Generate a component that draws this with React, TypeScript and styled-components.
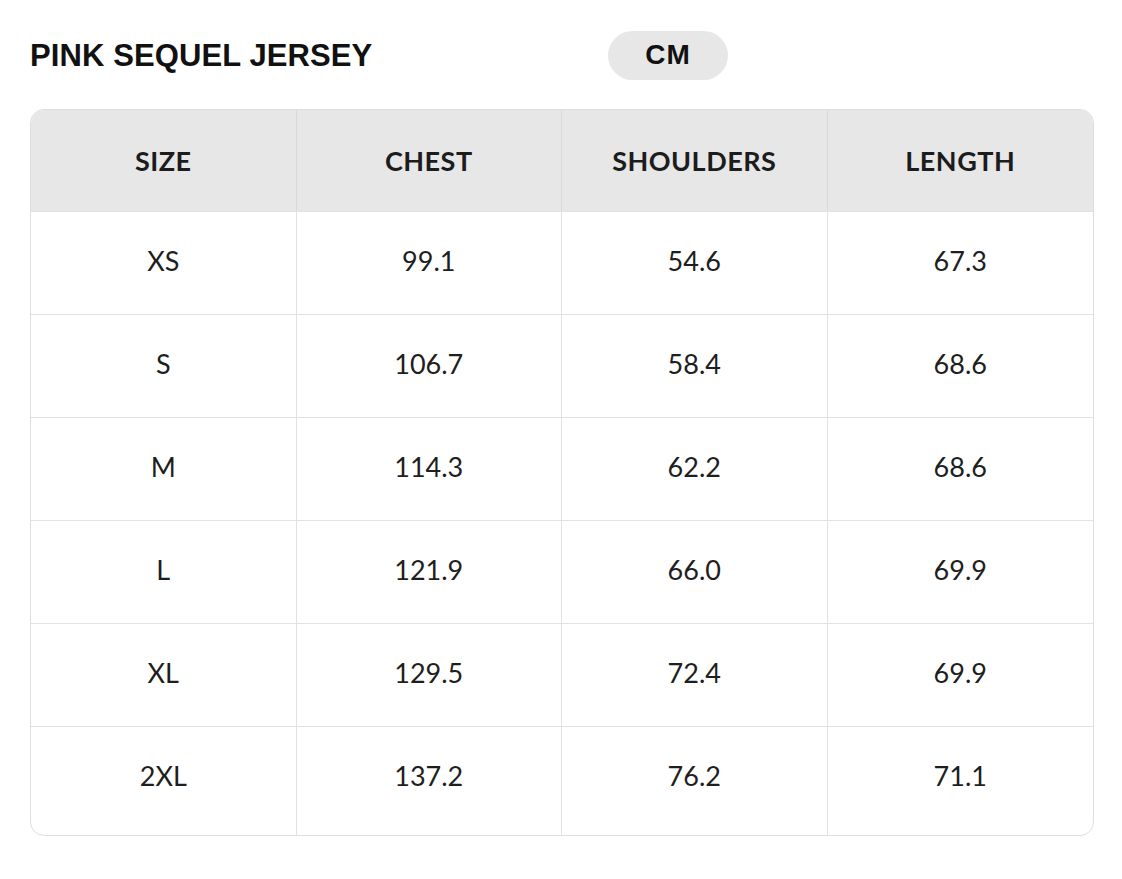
import React from 'react';
import styled, { createGlobalStyle } from 'styled-components';

const GlobalStyle = createGlobalStyle`
  html, body {
    margin: 0;
    padding: 0;
    background: #ffffff;
  }
`;

const Page = styled.div`
  width: 1122px;
  height: 879px;
  box-sizing: border-box;
  padding: 30px 28px 0 30px;
  background: #fff;
  font-family: Lato, "Open Sans", sans-serif;
  color: #1e1e1e;
`;

const TopBar = styled.div`
  display: flex;
  align-items: center;
  height: 50px;
  margin-bottom: 29px;
`;

const Title = styled.h1`
  margin: 0;
  width: 578px;
  font-family: "Liberation Sans", Arial, sans-serif;
  font-weight: 700;
  font-size: 31px;
  letter-spacing: 0.1px;
  color: #111;
  padding-top: 2px;
`;

const UnitPill = styled.div`
  width: 120px;
  height: 49px;
  border-radius: 25px;
  background: #e7e7e7;
  display: flex;
  align-items: center;
  justify-content: center;
  font-family: "Liberation Sans", Arial, sans-serif;
  font-weight: 700;
  font-size: 28px;
  letter-spacing: 1px;
  color: #111;
`;

const TableWrap = styled.div`
  width: 1064px;
  border: 1.5px solid #dedede;
  border-radius: 14px;
  overflow: hidden;
  box-sizing: border-box;
`;

const Grid = styled.div`
  display: grid;
  grid-template-columns: repeat(4, 1fr);
`;

const HeadCell = styled.div<{ $last?: boolean }>`
  height: 101px;
  display: flex;
  align-items: center;
  justify-content: center;
  background: #e7e7e7;
  border-right: ${(p) => (p.$last ? 'none' : '1.5px solid #d9d9d9')};
  font-family: Lato, sans-serif;
  font-weight: 700;
  font-size: 27px;
  letter-spacing: 0.5px;
  color: #1c1c1c;
`;

const Cell = styled.div<{ $last?: boolean; $bottom?: boolean }>`
  height: ${(p) => (p.$bottom ? '109px' : '103px')};
  display: flex;
  align-items: center;
  justify-content: center;
  border-right: ${(p) => (p.$last ? 'none' : '1.5px solid #e2e2e2')};
  border-top: 1.5px solid #e2e2e2;
  font-size: 27px;
  color: #1e1e1e;
  padding-bottom: ${(p) => (p.$bottom ? '12px' : '5px')};
  box-sizing: border-box;
`;

const heads = ['SIZE', 'CHEST', 'SHOULDERS', 'LENGTH'];

const rows = [
  ['XS', '99.1', '54.6', '67.3'],
  ['S', '106.7', '58.4', '68.6'],
  ['M', '114.3', '62.2', '68.6'],
  ['L', '121.9', '66.0', '69.9'],
  ['XL', '129.5', '72.4', '69.9'],
  ['2XL', '137.2', '76.2', '71.1'],
];

export default function App() {
  return (
    <>
      <GlobalStyle />
      <Page>
        <TopBar>
          <Title>PINK SEQUEL JERSEY</Title>
          <UnitPill>CM</UnitPill>
        </TopBar>
        <TableWrap>
          <Grid>
            {heads.map((h, i) => (
              <HeadCell key={h} $last={i === heads.length - 1}>
                {h}
              </HeadCell>
            ))}
            {rows.map((r, ri) =>
              r.map((v, ci) => (
                <Cell
                  key={`${ri}-${ci}`}
                  $last={ci === r.length - 1}
                  $bottom={ri === rows.length - 1}
                >
                  {v}
                </Cell>
              ))
            )}
          </Grid>
        </TableWrap>
      </Page>
    </>
  );
}
